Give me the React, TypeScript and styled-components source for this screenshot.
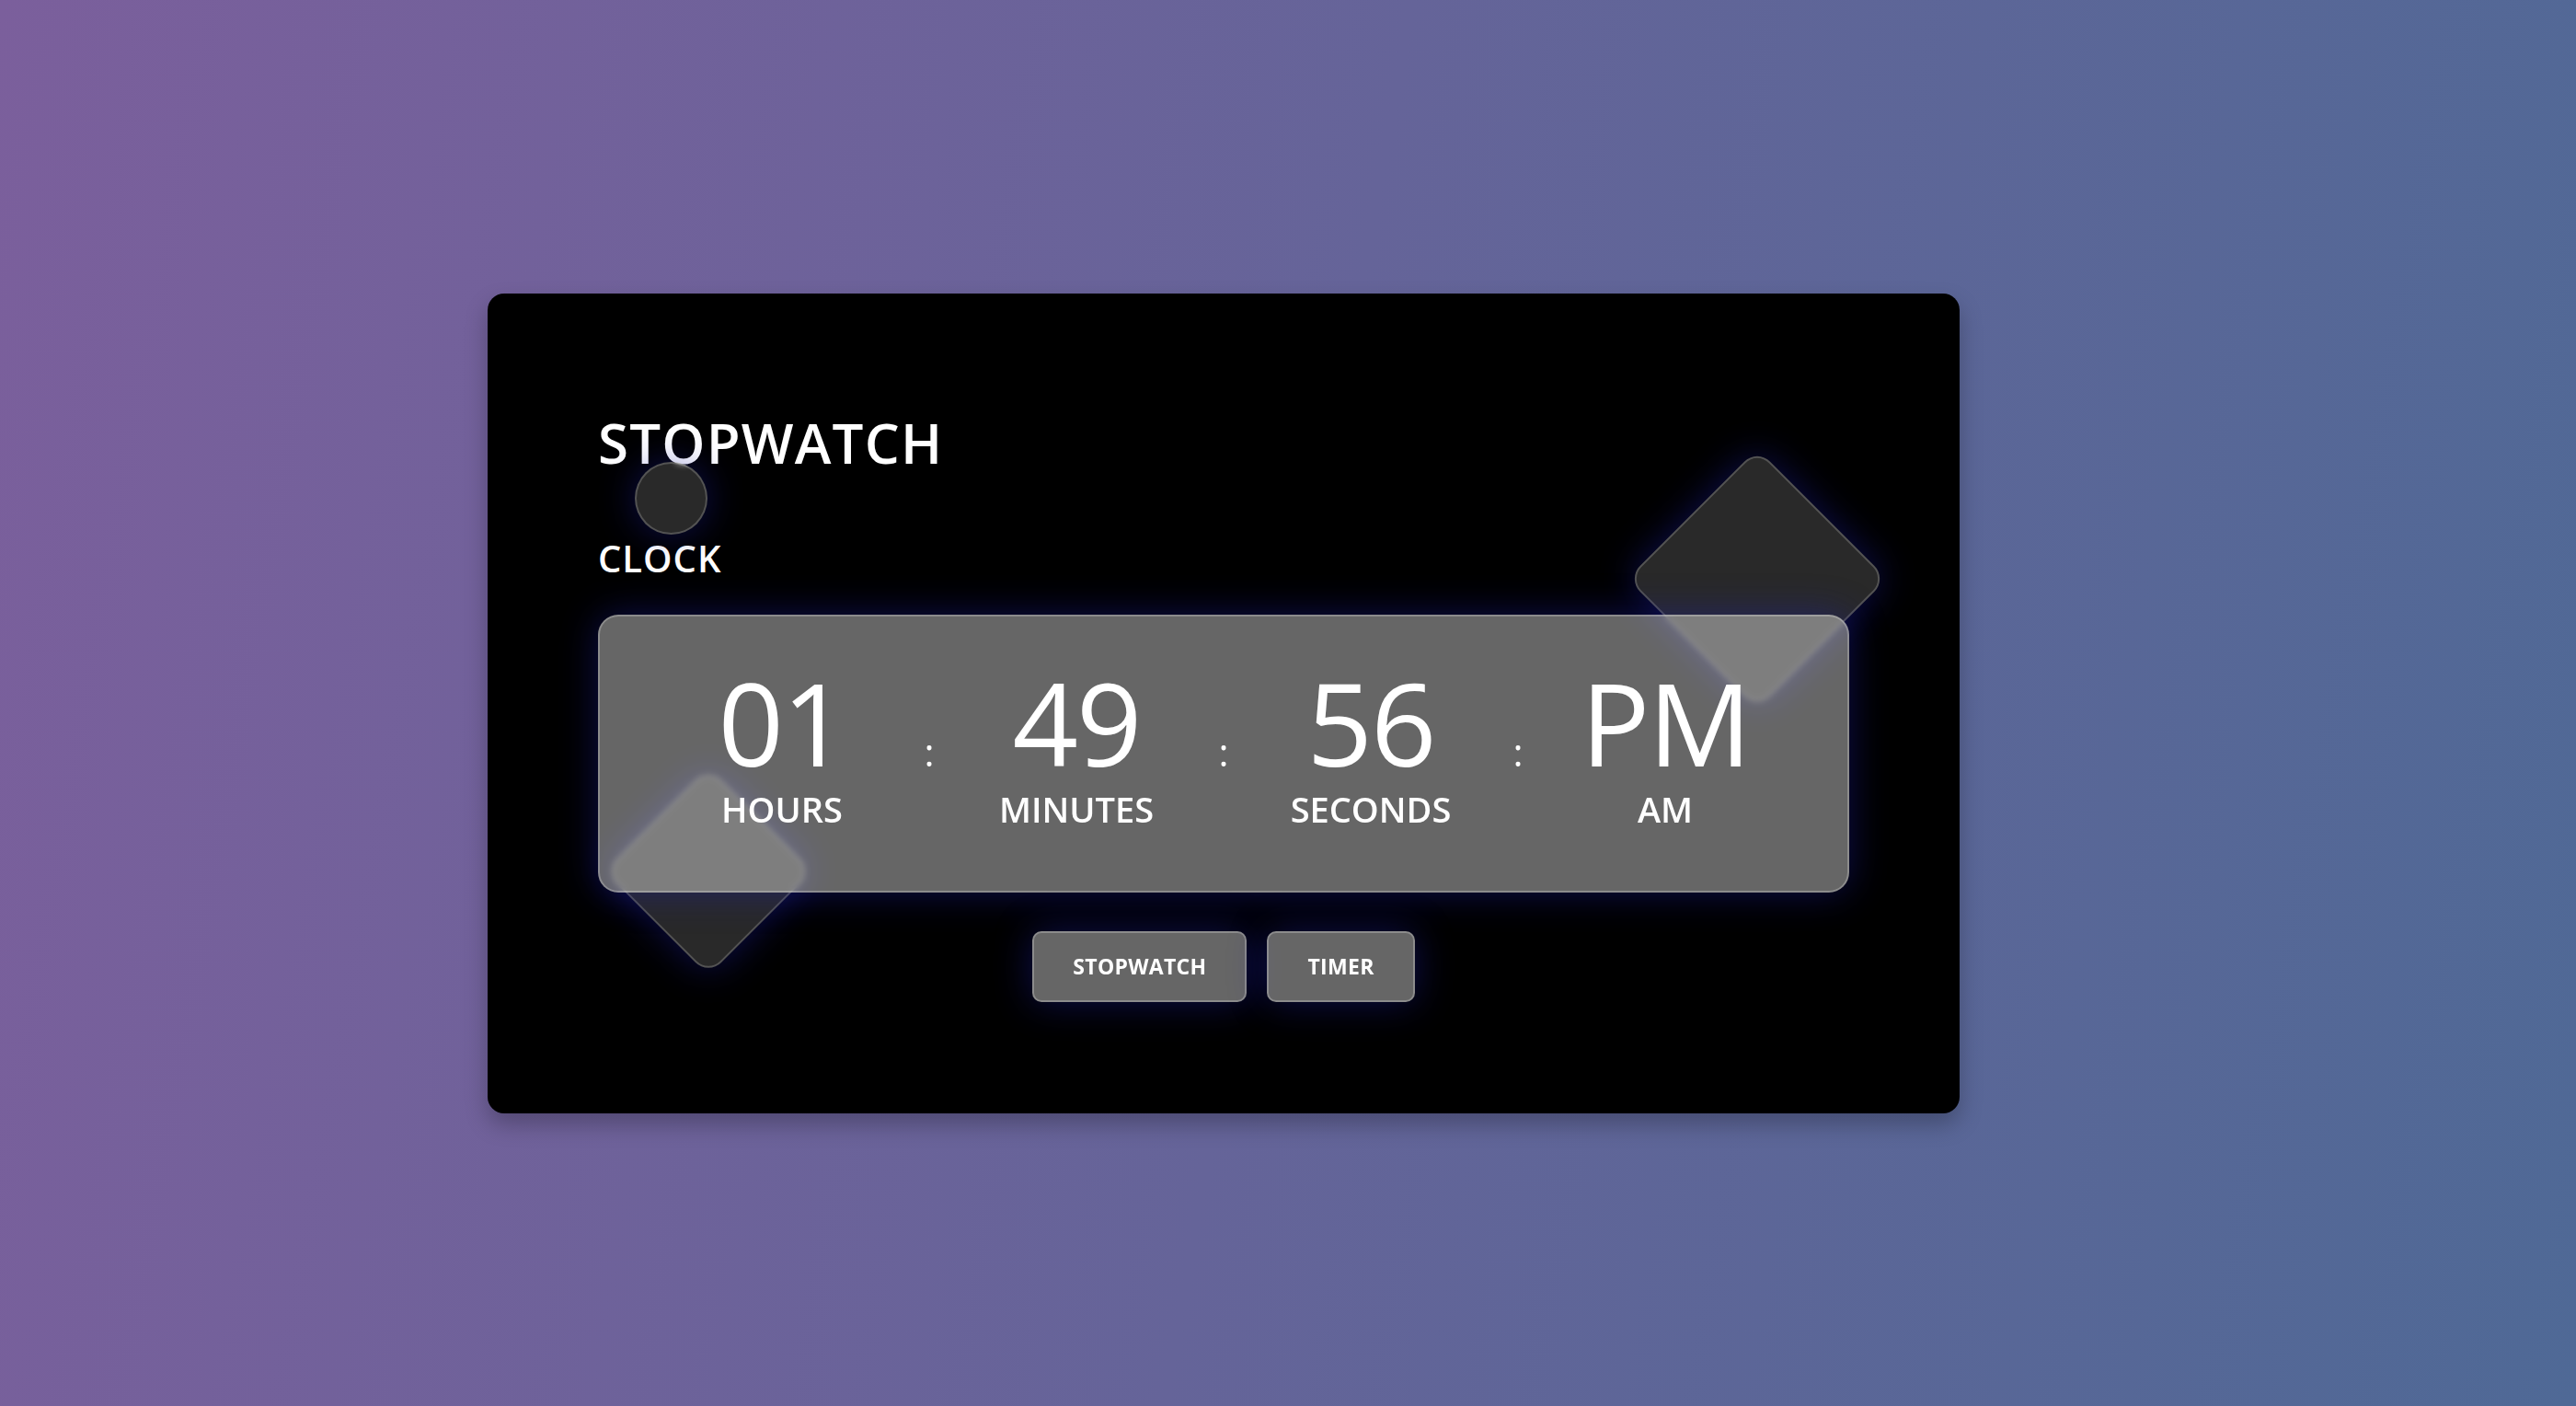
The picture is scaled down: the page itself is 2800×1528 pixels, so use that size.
import React from 'react';
import styled, { createGlobalStyle } from 'styled-components';

const GlobalStyle = createGlobalStyle`
    * {
        box-sizing: border-box;
        margin: 0;
        padding: 0;
    }

    body {
        font-family: 'Open Sans', 'Noto Sans', sans-serif;
        color: #fff;
    }
`;

const glow = '0 0 40px rgba(28, 32, 170, 0.45)';

const Page = styled.div`
    min-height: 100vh;
    display: flex;
    align-items: center;
    justify-content: center;
    padding-right: 140px;
    background: linear-gradient(100deg, #7b5f9c 0%, #4f6996 100%);
`;

const Card = styled.div`
    position: relative;
    width: 1600px;
    padding: 126px 120px 121px;
    background: #000;
    border-radius: 18px;
    box-shadow: 0 12px 24px rgba(0, 0, 0, 0.25);
`;

const Header = styled.div`
    position: relative;
    display: flex;
    flex-direction: column;
    align-items: flex-start;
`;

const Title = styled.h1`
    font-size: 60px;
    font-weight: 600;
    line-height: 72px;
    letter-spacing: 1.2px;
`;

const Subtitle = styled.h2`
    margin-top: 66px;
    font-size: 40px;
    font-weight: 600;
    line-height: 48px;
    letter-spacing: 1px;
`;

const Bubble = styled.div`
    position: absolute;
    left: 40px;
    top: 57px;
    width: 79px;
    height: 79px;
    border-radius: 50%;
    background: rgba(255, 255, 255, 0.16);
    border: 2px solid rgba(255, 255, 255, 0.2);
    backdrop-filter: blur(3px);
    box-shadow: ${glow};
`;

const Diamond = styled.div<{ $size: number; $left: number; $top: number }>`
    position: absolute;
    left: ${(p) => p.$left}px;
    top: ${(p) => p.$top}px;
    width: ${(p) => p.$size}px;
    height: ${(p) => p.$size}px;
    border-radius: 20px;
    transform: rotate(45deg);
    background: rgba(255, 255, 255, 0.16);
    border: 2px solid rgba(255, 255, 255, 0.2);
    box-shadow: ${glow};
`;

const Glass = styled.div`
    position: relative;
    z-index: 1;
    margin-top: 37px;
    padding: 60px 0 66px;
    display: flex;
    justify-content: center;
    align-items: baseline;
    background: rgba(255, 255, 255, 0.4);
    border: 2px solid rgba(255, 255, 255, 0.25);
    border-radius: 22px;
    backdrop-filter: blur(3px);
    box-shadow: ${glow};
`;

const Unit = styled.div`
    width: 200px;
    display: flex;
    flex-direction: column;
    align-items: center;
`;

const Value = styled.span`
    font-size: 125px;
    font-weight: 400;
    line-height: 110px;
    letter-spacing: -2px;
`;

const Label = styled.span`
    margin-top: 16px;
    font-size: 38px;
    font-weight: 600;
    line-height: 46px;
`;

const Colon = styled.span`
    width: 40px;
    margin: 0 40px;
    text-align: center;
    font-size: 42px;
    line-height: 1;
`;

const Actions = styled.div`
    position: relative;
    z-index: 1;
    margin-top: 42px;
    display: flex;
    justify-content: center;
    gap: 22px;
`;

const Button = styled.button`
    padding: 22px 42px;
    font-family: inherit;
    font-size: 23px;
    font-weight: 700;
    line-height: 29px;
    letter-spacing: 0.3px;
    color: #fff;
    background: rgba(255, 255, 255, 0.4);
    border: 2px solid rgba(255, 255, 255, 0.25);
    border-radius: 10px;
    box-shadow: ${glow};
    cursor: pointer;
`;

const units = [
    { value: '01', label: 'HOURS' },
    { value: '49', label: 'MINUTES' },
    { value: '56', label: 'SECONDS' },
    { value: 'PM', label: 'AM' },
];

const App = () => {
    return (
        <Page>
            <GlobalStyle />
            <Card>
                <Diamond $size={200} $left={1280} $top={210} />
                <Diamond $size={160} $left={160} $top={548} />
                <Header>
                    <Title>STOPWATCH</Title>
                    <Bubble />
                    <Subtitle>CLOCK</Subtitle>
                </Header>
                <Glass>
                    {units.map((u, i) => (
                        <React.Fragment key={u.label}>
                            {i > 0 && <Colon>:</Colon>}
                            <Unit>
                                <Value>{u.value}</Value>
                                <Label>{u.label}</Label>
                            </Unit>
                        </React.Fragment>
                    ))}
                </Glass>
                <Actions>
                    <Button>STOPWATCH</Button>
                    <Button>TIMER</Button>
                </Actions>
            </Card>
        </Page>
    );
};

export default App;
